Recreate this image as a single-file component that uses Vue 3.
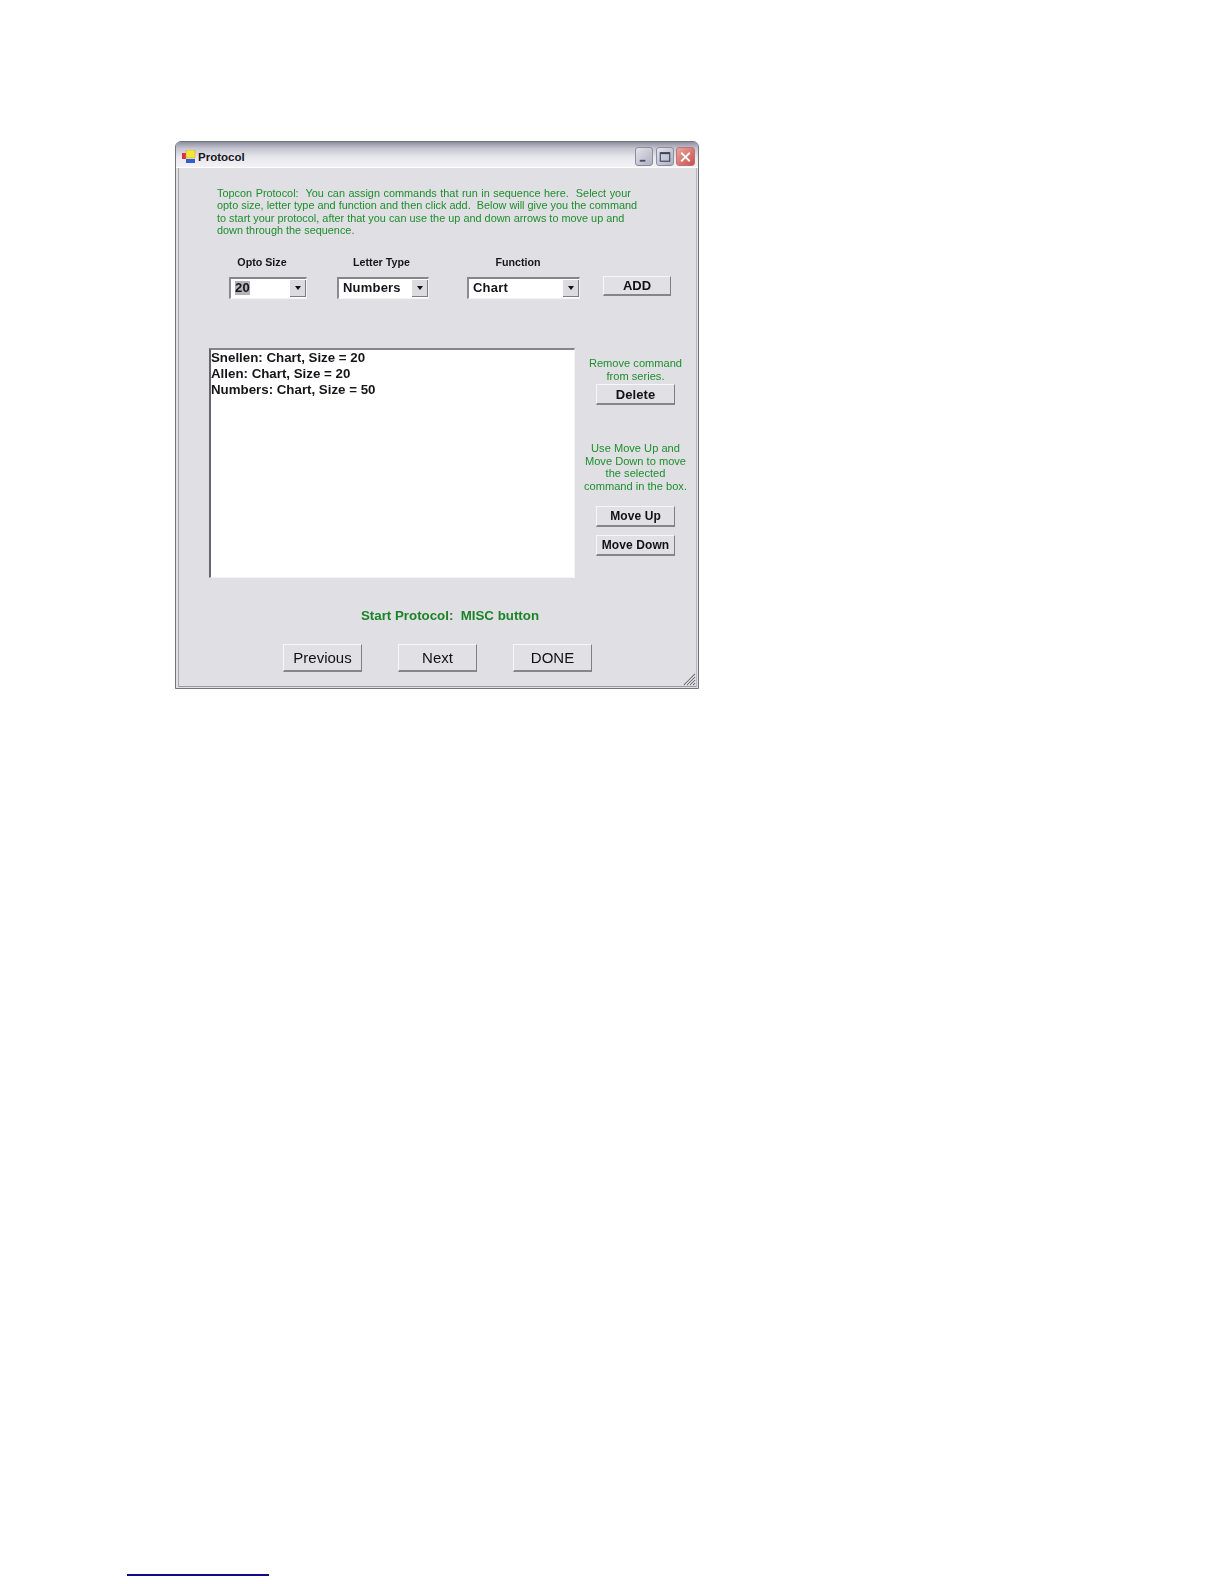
<script setup>
const introLines = [
  'Topcon Protocol:  You can assign commands that run in sequence here.  Select your',
  'opto size, letter type and function and then click add.  Below will give you the command',
  'to start your protocol, after that you can use the up and down arrows to move up and',
  'down through the sequence.'
]
const combos = [
  { label: 'Opto Size', value: '20', cls: 'opto', selected: true },
  { label: 'Letter Type', value: 'Numbers', cls: 'letter', selected: false },
  { label: 'Function', value: 'Chart', cls: 'func', selected: false }
]
const commands = ['Snellen: Chart, Size = 20', 'Allen: Chart, Size = 20', 'Numbers: Chart, Size = 50']
const navButtons = ['Previous', 'Next', 'DONE']
const startText = 'Start Protocol:  MISC button'
</script>

<template>
  <div class="page">
    <section class="window">
      <header class="titlebar">
        <svg class="app-icon" width="14" height="14" viewBox="0 0 14 14">
          <rect x="0" y="3" width="4" height="6" fill="#d8304a" />
          <rect x="4" y="0" width="9" height="8" fill="#f6e43a" stroke="#c9a92a" stroke-width="0.6" />
          <rect x="4" y="9" width="9" height="4" fill="#2f5fd0" />
        </svg>
        <span class="title">Protocol</span>
        <div class="controls">
          <button class="ctl">
            <svg width="17" height="18" viewBox="0 0 17 18"><rect x="4" y="12" width="6" height="2" fill="#4a4f66" /></svg>
          </button>
          <button class="ctl">
            <svg width="17" height="18" viewBox="0 0 17 18"><rect x="3.5" y="4.5" width="10" height="9" fill="none" stroke="#3f4560" stroke-width="1.2" /><rect x="3.5" y="4" width="10" height="2" fill="#3f4560" /></svg>
          </button>
          <button class="ctl close">
            <svg width="18" height="18" viewBox="0 0 18 18"><path d="M4.5 4.5 L13.5 13.5 M13.5 4.5 L4.5 13.5" stroke="#fff" stroke-width="2" /></svg>
          </button>
        </div>
      </header>

      <div class="client">
        <div class="intro">
          <div v-for="line in introLines" :key="line" class="intro-line">{{ line }}</div>
        </div>

        <div class="form-row">
          <div v-for="c in combos" :key="c.label" class="field" :class="c.cls">
            <div class="field-label">{{ c.label }}</div>
            <div class="combo">
              <span class="combo-value" :class="{ selected: c.selected }">{{ c.value }}</span>
              <span class="combo-arrow"><i class="tri"></i></span>
            </div>
          </div>
          <button class="btn add">ADD</button>
        </div>

        <div class="main-row">
          <div class="listbox">
            <div v-for="cmd in commands" :key="cmd" class="list-item">{{ cmd }}</div>
          </div>
          <aside class="side">
            <p class="hint first">Remove command<br />from series.</p>
            <button class="btn side-btn del">Delete</button>
            <p class="hint second">Use Move Up and<br />Move Down to move<br />the selected<br />command in the box.</p>
            <button class="btn side-btn up">Move Up</button>
            <button class="btn side-btn down">Move Down</button>
          </aside>
        </div>

        <div class="start">{{ startText }}</div>

        <div class="nav-row">
          <button v-for="b in navButtons" :key="b" class="btn nav">{{ b }}</button>
        </div>

        <svg class="grip" width="14" height="14" viewBox="0 0 14 14">
          <path d="M13 2 L2 13 M13 5 L5 13 M13 8 L8 13 M13 11 L11 13" stroke="#74747c" stroke-width="1.2" fill="none" />
          <path d="M13 3.4 L3.4 13 M13 6.4 L6.4 13 M13 9.4 L9.4 13" stroke="#ffffff" stroke-width="0.8" fill="none" />
        </svg>
      </div>
    </section>
    <div class="footnote-rule"></div>
  </div>
</template>

<style>
html, body { margin: 0; background: #ffffff; }
</style>

<style scoped>
.page {
  width: 1224px;
  height: 1584px;
  box-sizing: border-box;
  padding: 141px 0 0 175px;
  background: #fff;
  overflow: hidden;
  font-family: "Liberation Sans", Arial, sans-serif;
}
.window {
  width: 524px;
  height: 548px;
  box-sizing: border-box;
  display: flex;
  flex-direction: column;
  border: 1px solid #72737c;
  border-radius: 6px 6px 0 0;
  background: #dfdfe4;
  filter: blur(0.35px);
}
.titlebar {
  height: 26px;
  box-sizing: border-box;
  flex: none;
  display: flex;
  align-items: center;
  padding: 4px 0 0 6px;
  border-radius: 5px 5px 0 0;
  background: linear-gradient(#8e8f9e 0, #c3c4cf 25%, #e6e6ec 60%, #f3f3f6 100%);
  border-bottom: 1px solid #ffffff;
}
.app-icon { flex: none; }
.title {
  margin-left: 2px;
  font-size: 11.5px;
  font-weight: 700;
  color: #16161c;
}
.controls {
  margin-left: auto;
  margin-right: 3px;
  display: flex;
  gap: 3px;
}
.ctl {
  width: 18px;
  height: 19px;
  padding: 0;
  display: flex;
  align-items: center;
  justify-content: center;
  border: 1px solid #8b8e9f;
  border-radius: 3px;
  background: linear-gradient(135deg, #e3e4ea, #aeb0c0);
}
.ctl.close {
  width: 19px;
  margin-left: -1px;
  border-color: #b9757a;
  background: linear-gradient(135deg, #e9a59c, #cc4f4f);
}
.client {
  position: relative;
  flex: 1;
  margin: 0 1px 1px 2px;
  border-left: 1px solid #a8a8b0;
  border-right: 1px solid #b8b8c0;
  border-bottom: 1px solid #9a9aa2;
  padding: 0;
  display: flex;
  flex-direction: column;
}
.intro {
  margin: 19px 0 0 38px;
  color: #1e8f2c;
  font-size: 10.9px;
  line-height: 12.4px;
}
.intro-line { white-space: pre; }
.intro-line:first-child { word-spacing: 0.5px; }
.form-row {
  margin: 18.4px 0 0 50px;
  display: flex;
  align-items: flex-end;
}
.field { display: flex; flex-direction: column; }
.field.opto { width: 78px; margin-right: 30px; }
.field.letter { width: 92px; margin-right: 38px; }
.field.func { width: 113px; margin-right: 23px; }
.field-label {
  height: 14px;
  line-height: 14px;
  font-size: 10.7px;
  font-weight: 700;
  text-align: center;
  color: #15151a;
  margin-bottom: 8px;
}
.opto .field-label { padding-right: 12px; }
.letter .field-label { padding-right: 3px; }
.func .field-label { padding-right: 11px; }
.combo {
  height: 22px;
  box-sizing: border-box;
  display: flex;
  align-items: center;
  justify-content: space-between;
  background: #fff;
  border-top: 2px solid #85858d;
  border-left: 2px solid #8a8a92;
  border-right: 1px solid #f4f4f6;
  border-bottom: 1px solid #f4f4f6;
  padding: 0 0 2px 4px;
}
.combo-value {
  font-size: 13px;
  font-weight: 700;
  letter-spacing: 0.2px;
  line-height: 14px;
  color: #15151a;
}
.combo-value.selected { background: #b4b4b8; }
.combo-arrow {
  width: 15px;
  height: 16px;
  margin-bottom: -2px;
  display: flex;
  align-items: center;
  justify-content: center;
  background: #dcdce0;
  border-right: 1px solid #7c7c84;
  border-bottom: 1px solid #7c7c84;
}
.tri {
  width: 0;
  height: 0;
  border-left: 3.5px solid transparent;
  border-right: 3.5px solid transparent;
  border-top: 4px solid #111;
}
.btn {
  box-sizing: border-box;
  padding: 0;
  background: #e0e0e5;
  border-top: 1px solid #f7f7f9;
  border-left: 1px solid #f7f7f9;
  border-right: 1px solid #7e7e87;
  border-bottom: 2px solid #85858e;
  border-radius: 0;
  font-family: inherit;
  color: #111116;
}
.add {
  width: 68px;
  height: 20px;
  margin-bottom: 3px;
  font-size: 13px;
  font-weight: 700;
}
.main-row {
  margin: 49px 0 0 30px;
  display: flex;
  align-items: flex-start;
}
.listbox {
  width: 366px;
  height: 230px;
  flex: none;
  box-sizing: border-box;
  background: #fff;
  border-top: 2px solid #85858d;
  border-left: 2px solid #66666e;
  border-right: 1px solid #f4f4f6;
  border-bottom: 1px solid #f4f4f6;
  padding: 0;
}
.list-item {
  font-size: 13.3px;
  font-weight: 700;
  line-height: 16.2px;
  color: #15151a;
  white-space: pre;
}
.side {
  margin-left: 9px;
  width: 103px;
  display: flex;
  flex-direction: column;
  align-items: center;
}
.hint {
  margin: 0;
  color: #1e8f2c;
  font-size: 11.1px;
  line-height: 12.5px;
  text-align: center;
  white-space: pre;
}
.hint.first { margin-top: 9px; }
.side-btn {
  width: 79px;
  height: 21px;
  font-size: 12px;
  font-weight: 700;
  letter-spacing: 0.1px;
}
.side-btn.del { margin-top: 2px; font-size: 13px; }
.hint.second { margin-top: 37px; }
.side-btn.up { margin-top: 14px; }
.side-btn.down { margin-top: 8px; }
.start {
  margin: 30px 0 0 182px;
  color: #1c8428;
  font-size: 13.3px;
  font-weight: 700;
  line-height: 15px;
  white-space: pre;
}
.nav-row {
  margin: 20.5px 0 0 104px;
  display: flex;
  gap: 36px;
}
.nav {
  width: 79px;
  height: 28px;
  font-size: 15px;
  font-weight: 400;
}
.grip {
  position: absolute;
  right: 0;
  bottom: 0;
}
.footnote-rule {
  width: 142px;
  height: 2px;
  margin: 885px 0 0 -48px;
  background: #0b0b86;
}
</style>
